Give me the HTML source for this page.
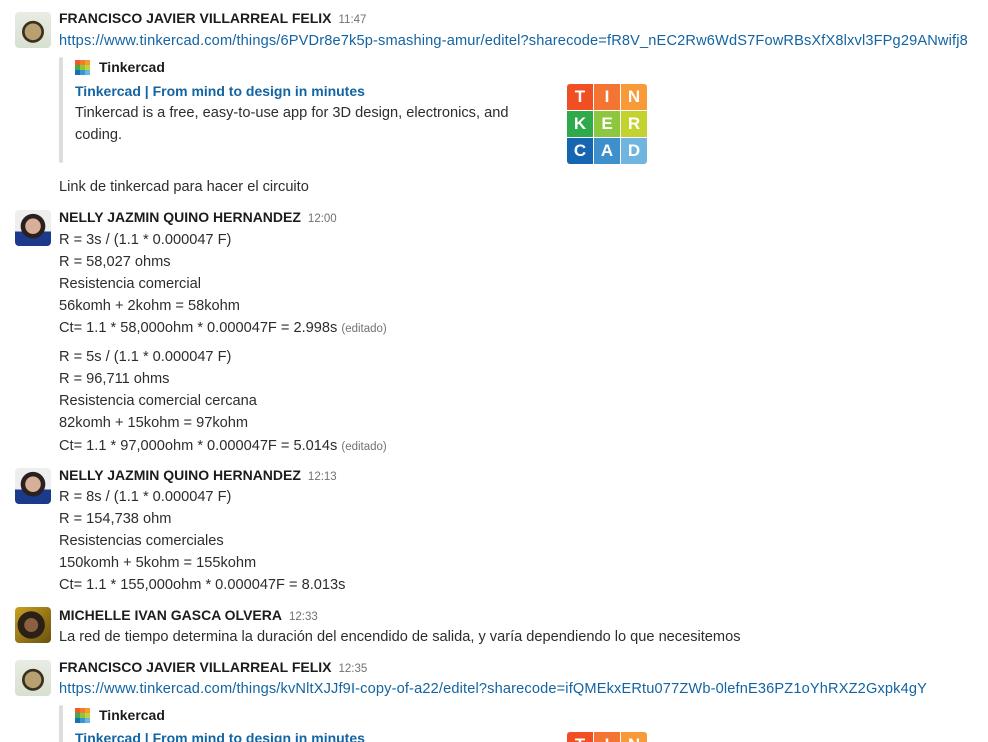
<!DOCTYPE html>
<html><head><meta charset="utf-8"><style>
html,body{margin:0;width:988px;height:742px;overflow:hidden}
body{background:#fff;font-family:"Liberation Sans",sans-serif;color:#2c2d30;position:relative}
.a{position:absolute;left:15px;width:36px;height:36px;border-radius:4px;overflow:hidden}
.l{position:absolute;left:59px;font-size:14.6px;line-height:18px;white-space:nowrap}
.n{font-weight:bold;color:#1d1c1d;font-size:14px}
.t{font-size:11.5px;color:#717274;font-weight:normal;margin-left:7px}
.lk{color:#1264a3}
.e{font-size:11.5px;color:#717274}
.bar{position:absolute;left:59px;width:4px;background:#ddd;border-radius:2px}
.at{left:75px}
.hd{left:99px}
.ico{position:absolute;left:75px;width:15px;height:15px;display:grid;grid-template-columns:repeat(3,5px);grid-template-rows:repeat(3,5px)}
.ico i{display:block}
.logo{position:absolute;left:567px;width:80px;height:80px;display:grid;grid-template-columns:repeat(3,26px);grid-template-rows:repeat(3,26px);gap:1px;border-radius:3px;overflow:hidden}
.logo b{color:#fff;font-size:17px;display:flex;align-items:center;justify-content:center}
</style></head><body>
<div class="a" style="top:12px;background:radial-gradient(circle at 50% 55%,#b8a070 0 30%,#3a3020 32% 40%,transparent 42%),linear-gradient(#e8ece4,#d8e0d0)"></div>
<div class="l n" style="top:9px">FRANCISCO JAVIER VILLARREAL FELIX<span class="t">11:47</span></div>
<div class="l lk" style="top:32px;letter-spacing:0.15px">https://www.tinkercad.com/things/6PVDr8e7k5p-smashing-amur/editel?sharecode=fR8V_nEC2Rw6WdS7FowRBsXfX8lxvl3FPg29ANwifj8</div>
<div class="bar" style="top:57px;height:106px"></div>
<div class="ico" style="top:60px"><i style="background:#f05a28"></i><i style="background:#f47b2a"></i><i style="background:#f79a30"></i><i style="background:#3cae49"></i><i style="background:#8cc63f"></i><i style="background:#c2d431"></i><i style="background:#1a6fb5"></i><i style="background:#3d95d0"></i><i style="background:#6cb6e0"></i></div>
<div class="l hd n" style="top:58px">Tinkercad</div>
<div class="l at lk" style="top:82px;font-weight:bold;font-size:14px">Tinkercad | From mind to design in minutes</div>
<div class="l at" style="top:104px">Tinkercad is a free, easy-to-use app for 3D design, electronics, and</div>
<div class="l at" style="top:126px">coding.</div>
<div class="logo" style="top:84px"><b style="background:#f04e23">T</b><b style="background:#f47433">I</b><b style="background:#f89a38">N</b><b style="background:#2eaa4a">K</b><b style="background:#8dc63f">E</b><b style="background:#c4d22f">R</b><b style="background:#1565b0">C</b><b style="background:#3e90cd">A</b><b style="background:#6fb5df">D</b></div>
<div class="l" style="top:178px">Link de tinkercad para hacer el circuito</div>

<div class="a" style="top:210px;background:radial-gradient(circle at 50% 45%,#d8b09a 0 28%,#2a2020 30% 45%,transparent 47%),linear-gradient(#eee 60%,#1c3a8c 60%)"></div>
<div class="l n" style="top:208px">NELLY JAZMIN QUINO HERNANDEZ<span class="t">12:00</span></div>
<div class="l" style="top:231px">R = 3s / (1.1 * 0.000047 F)</div>
<div class="l" style="top:253px">R = 58,027 ohms</div>
<div class="l" style="top:275px">Resistencia comercial</div>
<div class="l" style="top:297px">56komh + 2kohm = 58kohm</div>
<div class="l" style="top:319px">Ct= 1.1 * 58,000ohm * 0.000047F = 2.998s <span class="e">(editado)</span></div>
<div class="l" style="top:348px">R = 5s / (1.1 * 0.000047 F)</div>
<div class="l" style="top:370px">R = 96,711 ohms</div>
<div class="l" style="top:392px">Resistencia comercial cercana</div>
<div class="l" style="top:414px">82komh + 15kohm = 97kohm</div>
<div class="l" style="top:437px">Ct= 1.1 * 97,000ohm * 0.000047F = 5.014s <span class="e">(editado)</span></div>

<div class="a" style="top:468px;background:radial-gradient(circle at 50% 45%,#d8b09a 0 28%,#2a2020 30% 45%,transparent 47%),linear-gradient(#eee 60%,#1c3a8c 60%)"></div>
<div class="l n" style="top:466px">NELLY JAZMIN QUINO HERNANDEZ<span class="t">12:13</span></div>
<div class="l" style="top:488px">R = 8s / (1.1 * 0.000047 F)</div>
<div class="l" style="top:510px">R = 154,738 ohm</div>
<div class="l" style="top:532px">Resistencias comerciales</div>
<div class="l" style="top:554px">150komh + 5kohm = 155kohm</div>
<div class="l" style="top:576px">Ct= 1.1 * 155,000ohm * 0.000047F = 8.013s</div>

<div class="a" style="top:607px;background:radial-gradient(circle at 45% 50%,#8a6040 0 25%,#2a2015 27% 50%,transparent 52%),linear-gradient(135deg,#c8a020,#6a5010)"></div>
<div class="l n" style="top:606px">MICHELLE IVAN GASCA OLVERA<span class="t">12:33</span></div>
<div class="l" style="top:628px">La red de tiempo determina la duración del encendido de salida, y varía dependiendo lo que necesitemos</div>

<div class="a" style="top:660px;background:radial-gradient(circle at 50% 55%,#b8a070 0 30%,#3a3020 32% 40%,transparent 42%),linear-gradient(#e8ece4,#d8e0d0)"></div>
<div class="l n" style="top:658px">FRANCISCO JAVIER VILLARREAL FELIX<span class="t">12:35</span></div>
<div class="l lk" style="top:680px;letter-spacing:0.15px">https://www.tinkercad.com/things/kvNltXJJf9I-copy-of-a22/editel?sharecode=ifQMEkxERtu077ZWb-0lefnE36PZ1oYhRXZ2Gxpk4gY</div>
<div class="bar" style="top:705px;height:37px;border-radius:2px 2px 0 0"></div>
<div class="ico" style="top:708px"><i style="background:#f05a28"></i><i style="background:#f47b2a"></i><i style="background:#f79a30"></i><i style="background:#3cae49"></i><i style="background:#8cc63f"></i><i style="background:#c2d431"></i><i style="background:#1a6fb5"></i><i style="background:#3d95d0"></i><i style="background:#6cb6e0"></i></div>
<div class="l hd n" style="top:706px">Tinkercad</div>
<div class="l at lk" style="top:729px;font-weight:bold;font-size:14px;height:13px;overflow:hidden">Tinkercad | From mind to design in minutes</div>
<div class="logo" style="top:732px;height:10px;border-radius:3px 3px 0 0"><b style="background:#f04e23">T</b><b style="background:#f47433">I</b><b style="background:#f89a38">N</b></div>
</body></html>
